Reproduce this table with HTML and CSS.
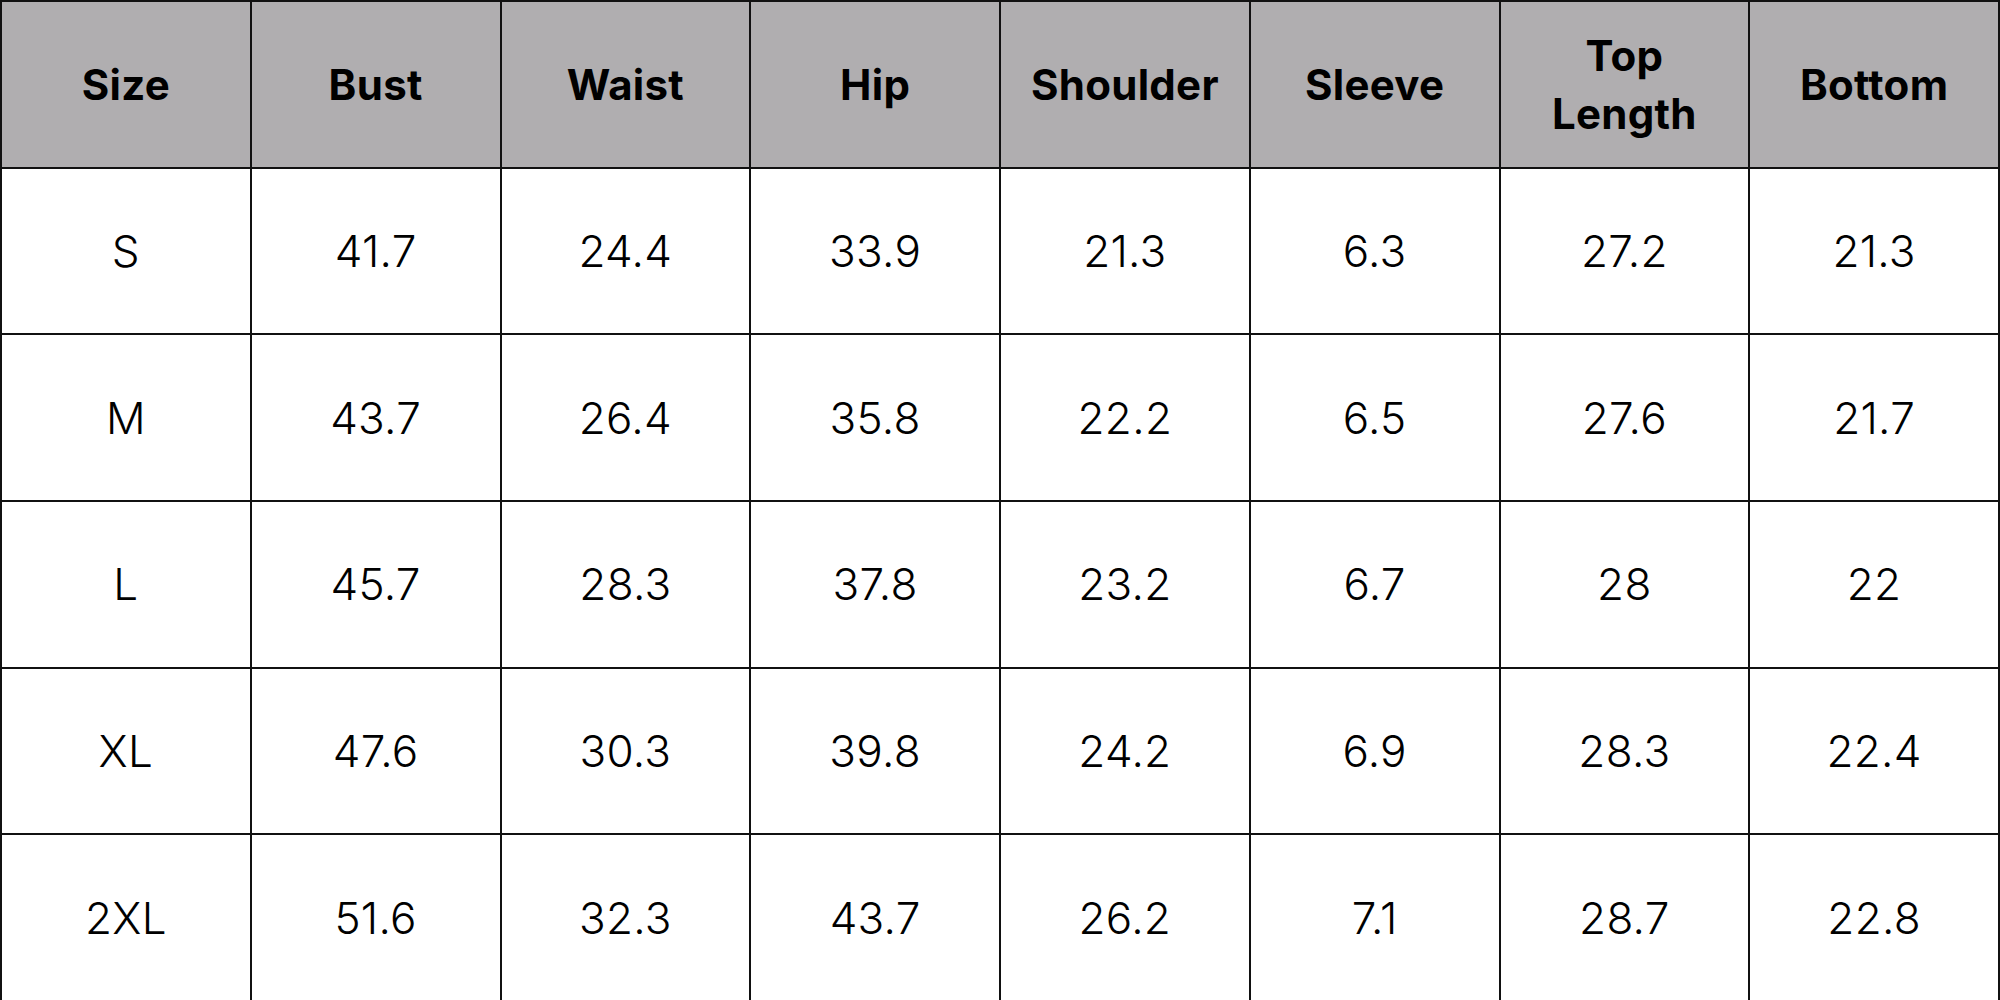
FILE: index.html
```html
<!DOCTYPE html>
<html>
<head>
<meta charset="utf-8">
<link rel="stylesheet" href="styles.css">
</head>
<body>
<table class="chart">
<thead>
<tr><th>Size</th><th>Bust</th><th>Waist</th><th>Hip</th><th>Shoulder</th><th>Sleeve</th><th>Top<br>Length</th><th>Bottom</th></tr>
</thead>
<tbody>
<tr><td>S</td><td>41.7</td><td>24.4</td><td>33.9</td><td>21.3</td><td>6.3</td><td>27.2</td><td>21.3</td></tr>
<tr><td>M</td><td>43.7</td><td>26.4</td><td>35.8</td><td>22.2</td><td>6.5</td><td>27.6</td><td>21.7</td></tr>
<tr><td>L</td><td>45.7</td><td>28.3</td><td>37.8</td><td>23.2</td><td>6.7</td><td>28</td><td>22</td></tr>
<tr><td>XL</td><td>47.6</td><td>30.3</td><td>39.8</td><td>24.2</td><td>6.9</td><td>28.3</td><td>22.4</td></tr>
<tr><td>2XL</td><td>51.6</td><td>32.3</td><td>43.7</td><td>26.2</td><td>7.1</td><td>28.7</td><td>22.8</td></tr>
</tbody>
</table>
</body>
</html>
```
FILE: styles.css
```css
html, body {
  margin: 0;
  padding: 0;
  background: #ffffff;
  overflow: hidden;
}
.chart {
  width: 2000px;
  height: 1000px;
  border-collapse: collapse;
  table-layout: fixed;
  font-family: Inter, "Liberation Sans", sans-serif;
  color: #000;
}
.chart tr {
  height: 166.66px;
}
.chart th, .chart td {
  border: 2px solid #111;
  text-align: center;
  vertical-align: middle;
  padding: 0;
}
.chart th {
  background: #b0aeb0;
  font-weight: 700;
  font-size: 42px;
  line-height: 1.4;
  letter-spacing: 0.3px;
  padding-top: 2px;
}
.chart td {
  font-weight: 300;
  font-size: 44px;
  letter-spacing: 0.3px;
}
```
